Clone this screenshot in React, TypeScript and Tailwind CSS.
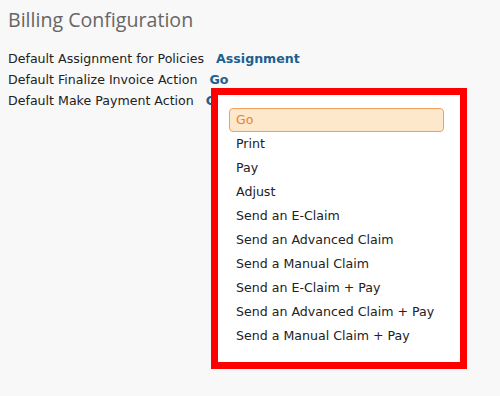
import React from "react";

const options = [
  "Go",
  "Print",
  "Pay",
  "Adjust",
  "Send an E-Claim",
  "Send an Advanced Claim",
  "Send a Manual Claim",
  "Send an E-Claim + Pay",
  "Send an Advanced Claim + Pay",
  "Send a Manual Claim + Pay",
];

const settings = [
  { label: "Default Assignment for Policies", value: "Assignment" },
  { label: "Default Finalize Invoice Action", value: "Go" },
  { label: "Default Make Payment Action", value: "Go" },
];

export default function App() {
  return (
    <div
      className="relative w-[500px] h-[396px] overflow-hidden bg-[#f8f8f8] text-[#222]"
      style={{ fontFamily: '"DejaVu Sans", Verdana, sans-serif' }}
    >
      <h1
        className="pl-2 pt-[8px] text-[19.6px] leading-[24px] text-[#666]"
        style={{ fontFamily: '"Open Sans", "DejaVu Sans", sans-serif' }}
      >
        Billing Configuration
      </h1>

      <div className="mt-[17px] pl-2 flex flex-col text-[12.6px]">
        {settings.map((s) => (
          <div key={s.label} className="flex h-[20.8px] items-center gap-[12px]">
            <span>{s.label}</span>
            <span className="font-bold text-[#1d5f8f]">{s.value}</span>
          </div>
        ))}
      </div>

      {/* dropdown list, framed by the red annotation box */}
      <div className="absolute left-[211px] top-[88px] w-[256px] h-[281px] border-[7px] border-[#ff0000] bg-white">
        <ul className="pt-[13px] pl-[11px] pr-[16px] text-[12.6px]">
          {options.map((o, i) => (
            <li
              key={o}
              className={
                i === 0
                  ? "h-[24px] flex items-center px-[6px] rounded-[4px] border border-[#f0a060] bg-[#fde8cc] text-[#e8832a]"
                  : "h-[24px] flex items-center px-[7px] text-[#222]"
              }
            >
              {o}
            </li>
          ))}
        </ul>
      </div>
    </div>
  );
}
